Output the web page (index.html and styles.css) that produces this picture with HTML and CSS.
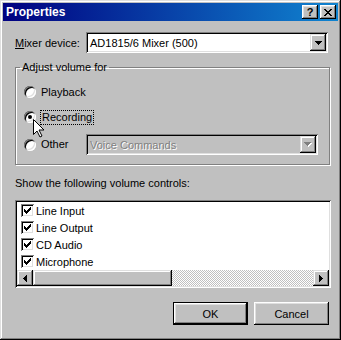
FILE: index.html
```html
<!DOCTYPE html>
<html lang="en">
<head>
    <meta charset="UTF-8">
    <meta name="viewport" content="width=device-width, initial-scale=1.0">
    <title>Properties</title>
    <link rel="stylesheet" href="styles.css">
</head>
<body>
    <div class="window">
        <div class="titlebar">
            <span class="title">Properties</span>
            <div class="title-btns">
                <span class="tbtn help">?</span>
                <span class="tbtn close">
                    <svg width="8" height="7" viewBox="0 0 8 7"><path d="M0 0h2v1h1v1h2v-1h1v-1h2v1h-1v1h-1v1h-1v1h1v1h1v1h1v1h-2v-1h-1v-1h-2v1h-1v1h-2v-1h1v-1h1v-1h1v-1h-1v-1h-1v-1h-1z" fill="#000"/></svg>
                </span>
            </div>
        </div>

        <div class="content">
            <div class="mixer-row">
                <label class="mixer-label"><u>M</u>ixer device:</label>
                <div class="combo mixer-combo">
                    <span class="combo-text">AD1815/6 Mixer (500)</span>
                    <span class="drop">
                        <svg width="7" height="4" viewBox="0 0 7 4"><path d="M0 0h7v1h-1v1h-1v1h-1v1h-1v-1h-1v-1h-1v-1h-1z" fill="#000"/></svg>
                    </span>
                </div>
            </div>

            <fieldset class="group">
                <legend>Adjust volume for</legend>
                <div class="opt">
                    <span class="radio"></span>
                    <span class="opt-label">Playback</span>
                </div>
                <div class="opt opt-rec">
                    <span class="radio checked"></span>
                    <span class="opt-label focus">Recording</span>
                </div>
                <div class="opt opt-other">
                    <span class="radio"></span>
                    <span class="opt-label other-label">Other</span>
                    <div class="combo voice-combo disabled">
                        <span class="combo-text">Voice Commands</span>
                        <span class="drop">
                            <svg width="8" height="5" viewBox="0 0 8 5"><path d="M1 1h7v1h-1v1h-1v1h-1v1h-1v-1h-1v-1h-1v-1h-1z" fill="#fff"/><path d="M0 0h7v1h-1v1h-1v1h-1v1h-1v-1h-1v-1h-1v-1h-1z" fill="#808080"/></svg>
                        </span>
                    </div>
                </div>
            </fieldset>

            <p class="caption">Show the following volume controls:</p>

            <div class="listbox">
                <ul class="items">
                    <li class="item"><span class="check"><svg width="7" height="7" viewBox="0 0 7 7"><path d="M6 0h1v3h-1v1h-1v1h-1v1h-1v1h-1v-1h-1v-1h-1v-3h1v1h1v1h1v-1h1v-1h1v-1h1z" fill="#000"/></svg></span>Line Input</li>
                    <li class="item"><span class="check"><svg width="7" height="7" viewBox="0 0 7 7"><path d="M6 0h1v3h-1v1h-1v1h-1v1h-1v1h-1v-1h-1v-1h-1v-3h1v1h1v1h1v-1h1v-1h1v-1h1z" fill="#000"/></svg></span>Line Output</li>
                    <li class="item"><span class="check"><svg width="7" height="7" viewBox="0 0 7 7"><path d="M6 0h1v3h-1v1h-1v1h-1v1h-1v1h-1v-1h-1v-1h-1v-3h1v1h1v1h1v-1h1v-1h1v-1h1z" fill="#000"/></svg></span>CD Audio</li>
                    <li class="item"><span class="check"><svg width="7" height="7" viewBox="0 0 7 7"><path d="M6 0h1v3h-1v1h-1v1h-1v1h-1v1h-1v-1h-1v-1h-1v-3h1v1h1v1h1v-1h1v-1h1v-1h1z" fill="#000"/></svg></span>Microphone</li>
                </ul>
                <div class="hscroll">
                    <span class="sb-btn">
                        <svg width="4" height="7" viewBox="0 0 4 7"><path d="M3 0h1v7h-1v-1h-1v-1h-1v-1h-1v-1h1v-1h1v-1h1z" fill="#000"/></svg>
                    </span>
                    <div class="track">
                        <span class="thumb"></span>
                    </div>
                    <span class="sb-btn">
                        <svg width="4" height="7" viewBox="0 0 4 7"><path d="M0 0h1v1h1v1h1v1h1v1h-1v1h-1v1h-1v1h-1z" fill="#000"/></svg>
                    </span>
                </div>
            </div>

            <div class="actions">
                <button class="btn default">OK</button>
                <button class="btn">Cancel</button>
            </div>
        </div>

        <!-- mouse pointer over the Recording option -->
        <svg class="cursor" width="12" height="19" viewBox="0 0 12 19">
            <path d="M0.5 0.5v15l3.5-3.5 3 6 2-1-3-6h5z" fill="#fff" stroke="#000" stroke-width="1"/>
        </svg>
    </div>
</body>
</html>
```

FILE: styles.css
```css
* {
    box-sizing: border-box;
}

html, body {
    margin: 0;
    padding: 0;
}

body {
    background: #c0c0c0;
}

.window {
    position: relative;
    width: 341px;
    height: 340px;
    padding: 3px;
    display: flex;
    flex-direction: column;
    background: #c0c0c0;
    box-shadow: inset -1px -1px #000, inset 1px 1px #dfdfdf, inset -2px -2px #808080, inset 2px 2px #fff;
    font: 11px "Liberation Sans", Arial, sans-serif;
    color: #000;
}

/* title bar */
.titlebar {
    height: 18px;
    display: flex;
    align-items: center;
    justify-content: space-between;
    padding: 0 2px 0 3px;
    background: linear-gradient(90deg, #000080, #1084d0);
    color: #fff;
}

.title {
    font-weight: bold;
    font-size: 12px;
}

.title-btns {
    display: flex;
    gap: 2px;
}

.tbtn {
    width: 16px;
    height: 14px;
    display: flex;
    align-items: center;
    justify-content: center;
    background: #c0c0c0;
    box-shadow: inset -1px -1px #000, inset 1px 1px #fff, inset -2px -2px #808080, inset 2px 2px #dfdfdf;
    color: #000;
    font-weight: bold;
    font-size: 11px;
    line-height: 1;
}

/* body */
.content {
    flex: 1;
    display: flex;
    flex-direction: column;
    padding: 11px 7px 0 12px;
}

.mixer-row {
    display: flex;
    align-items: center;
    height: 21px;
}

.mixer-label {
    width: 71px;
    flex: none;
}

.combo {
    height: 21px;
    display: flex;
    align-items: center;
    padding: 2px;
    background: #fff;
    box-shadow: inset 1px 1px #808080, inset -1px -1px #fff, inset 2px 2px #000, inset -2px -2px #dfdfdf;
}

.mixer-combo {
    width: 242px;
}

.combo-text {
    flex: 1;
    padding-left: 2px;
    white-space: nowrap;
}

.drop {
    width: 16px;
    height: 17px;
    display: flex;
    align-items: center;
    justify-content: center;
    background: #c0c0c0;
    box-shadow: inset -1px -1px #000, inset 1px 1px #dfdfdf, inset -2px -2px #808080, inset 2px 2px #fff;
}

.combo.disabled {
    background: #c0c0c0;
}

.combo.disabled .combo-text {
    color: #808080;
    text-shadow: 1px 1px 0 #fff;
}

/* group box */
.group {
    margin: 8px 1px 0 0;
    padding: 9px 8px 9px 8px;
    border: 1px solid #808080;
    box-shadow: 1px 1px 0 #fff, inset 1px 1px 0 #fff;
    min-width: 0;
}

.group legend {
    margin-left: -4px;
    padding: 0 2px;
    line-height: 12px;
}

.opt {
    display: flex;
    align-items: center;
    height: 20px;
}

.opt-rec {
    margin-top: 5px;
}

.opt-other {
    height: 21px;
    margin-top: 7px;
}

.radio {
    position: relative;
    width: 12px;
    height: 12px;
    flex: none;
    border-radius: 50%;
    background: #fff;
    box-shadow: inset 1px 1px #808080, inset -1px -1px #fff, inset 2px 2px #000, inset -2px -2px #dfdfdf;
}

.radio.checked::after {
    content: "";
    position: absolute;
    left: 4px;
    top: 4px;
    width: 4px;
    height: 4px;
    border-radius: 50%;
    background: #000;
}

.opt-label {
    margin-left: 5px;
    line-height: 13px;
}

.opt-label.focus {
    margin-left: 4px;
    padding: 0 1px;
    border: 1px dotted #000;
}

.other-label {
    width: 45px;
    flex: none;
}

.voice-combo {
    width: 232px;
}

.caption {
    margin: 12px 0 0;
    line-height: 13px;
}

/* list with checkboxes */
.listbox {
    margin-top: 10px;
    height: 88px;
    padding: 2px;
    display: flex;
    flex-direction: column;
    background: #fff;
    box-shadow: inset 1px 1px #808080, inset -1px -1px #fff, inset 2px 2px #000, inset -2px -2px #dfdfdf;
}

.items {
    list-style: none;
    margin: 0;
    padding: 0;
    flex: 1;
}

.item {
    height: 17px;
    display: flex;
    align-items: center;
    padding-left: 4px;
    white-space: nowrap;
}

.check {
    width: 13px;
    height: 13px;
    margin-right: 2px;
    display: flex;
    align-items: center;
    justify-content: center;
    background: #fff;
    box-shadow: inset 1px 1px #808080, inset -1px -1px #fff, inset 2px 2px #000, inset -2px -2px #dfdfdf;
}

.hscroll {
    display: flex;
    height: 16px;
}

.sb-btn {
    width: 16px;
    height: 16px;
    flex: none;
    display: flex;
    align-items: center;
    justify-content: center;
    background: #c0c0c0;
    box-shadow: inset -1px -1px #000, inset 1px 1px #dfdfdf, inset -2px -2px #808080, inset 2px 2px #fff;
}

.track {
    flex: 1;
    display: flex;
    background-color: #c0c0c0;
    background-image: repeating-conic-gradient(#c0c0c0 0 25%, #fff 0 50%);
    background-size: 2px 2px;
}

.thumb {
    width: 139px;
    background: #c0c0c0;
    box-shadow: inset -1px -1px #000, inset 1px 1px #dfdfdf, inset -2px -2px #808080, inset 2px 2px #fff;
}

/* buttons */
.actions {
    display: flex;
    justify-content: flex-end;
    gap: 6px;
    margin: 14px 2px 0 0;
}

.btn {
    width: 75px;
    height: 23px;
    padding: 0;
    border: none;
    background: #c0c0c0;
    font: inherit;
    color: #000;
    box-shadow: inset -1px -1px #000, inset 1px 1px #fff, inset -2px -2px #808080, inset 2px 2px #dfdfdf;
}

.btn.default {
    box-shadow: inset 0 0 0 1px #000, inset -2px -2px #000, inset 2px 2px #fff, inset -3px -3px #808080, inset 3px 3px #dfdfdf;
}

.cursor {
    position: absolute;
    left: 33px;
    top: 119px;
}
```
